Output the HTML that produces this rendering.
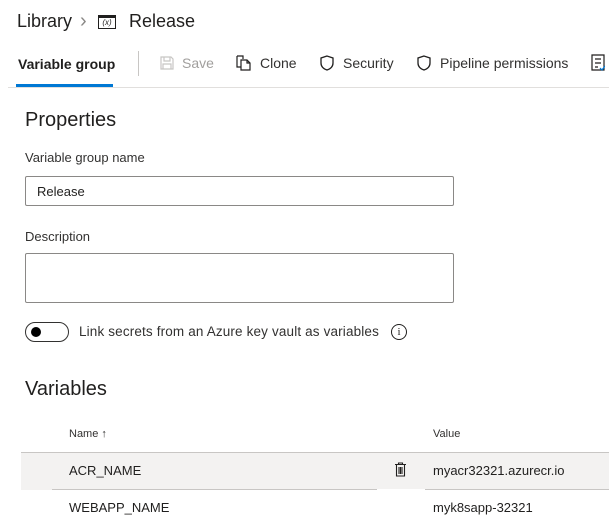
<!DOCTYPE html>
<html><head><meta charset="utf-8"><style>
*{margin:0;padding:0;box-sizing:border-box}
body{width:609px;height:532px;background:#fff;font-family:"Liberation Sans",sans-serif;color:#201f1e;position:relative;overflow:hidden}
.a{position:absolute;white-space:nowrap}
.tb{font-size:14px;color:#323130}
</style></head><body>
<div class="a" style="left:17px;top:11px;font-size:18px">Library</div>
<div class="a" style="left:80px;top:10px;font-size:20px;color:#8a8886">›</div>
<div class="a" style="left:98px;top:15px;width:18px;height:14px;border:1.5px solid #201f1e;border-top-width:3px;font-size:8px;font-style:italic;text-align:center;line-height:9px">(x)</div>
<div class="a" style="left:129px;top:11px;font-size:18px">Release</div>

<div class="a" style="left:18px;top:56px;font-size:14px;font-weight:600;color:#201f1e">Variable group</div>
<div class="a" style="left:16px;top:84px;width:97px;height:3px;background:#0078d4"></div>
<div class="a" style="left:8px;top:87px;width:601px;height:1px;background:#e1dfdd"></div>
<div class="a" style="left:138px;top:51px;width:1px;height:25px;background:#c8c6c4"></div>

<svg class="a" style="left:160px;top:56px" width="14" height="14" viewBox="0 0 14 14"><path d="M1 1h10l2 2v10H1z M4 1v4h6V1 M3 13V8h8v5" fill="none" stroke="#c8c6c4" stroke-width="1.2"/></svg>
<div class="a tb" style="left:182px;top:55px;color:#a19f9d">Save</div>
<svg class="a" style="left:236px;top:55px" width="16" height="16" viewBox="0 0 16 16"><path d="M1 1h6v3 M1 1v11h4 M5 5h6l3 3v7H5z M11 5v3h3" fill="none" stroke="#201f1e" stroke-width="1.2"/></svg>
<div class="a tb" style="left:260px;top:55px">Clone</div>
<svg class="a" style="left:320px;top:55px" width="14" height="16" viewBox="0 0 14 16"><path d="M7 1L1 3v5c0 4 3 6 6 7 3-1 6-3 6-7V3z" fill="none" stroke="#201f1e" stroke-width="1.3"/></svg>
<div class="a tb" style="left:343px;top:55px">Security</div>
<svg class="a" style="left:417px;top:55px" width="14" height="16" viewBox="0 0 14 16"><path d="M7 1L1 3v5c0 4 3 6 6 7 3-1 6-3 6-7V3z" fill="none" stroke="#201f1e" stroke-width="1.3"/></svg>
<div class="a tb" style="left:440px;top:55px">Pipeline permissions</div>
<svg class="a" style="left:591px;top:54px" width="14" height="18" viewBox="0 0 14 18"><path d="M1 1h12v15H1z M4 5h6 M4 9h6 M4 13h3" fill="none" stroke="#201f1e" stroke-width="1.2"/><path d="M9 14l2 2 3-4" fill="none" stroke="#0078d4" stroke-width="1.2"/></svg>

<div class="a" style="left:25px;top:109px;font-size:20px">Properties</div>
<div class="a" style="left:25px;top:150px;font-size:13px;color:#323130">Variable group name</div>
<div class="a" style="left:25px;top:176px;width:429px;height:30px;border:1px solid #8a8886;border-radius:2px;font-size:13px;padding:7px 11px">Release</div>
<div class="a" style="left:25px;top:229px;font-size:13px;color:#323130">Description</div>
<div class="a" style="left:25px;top:253px;width:429px;height:50px;border:1px solid #8a8886;border-radius:2px"></div>

<div class="a" style="left:25px;top:322px;width:44px;height:20px;border:1px solid #323130;border-radius:10px"></div>
<div class="a" style="left:31px;top:327px;width:10px;height:10px;border-radius:50%;background:#000"></div>
<div class="a" style="left:79px;top:324px;font-size:13.5px;letter-spacing:0.15px;color:#323130">Link secrets from an Azure key vault as variables</div>
<div class="a" style="left:391px;top:324px;width:16px;height:16px;border:1.3px solid #201f1e;border-radius:50%;font-size:11px;text-align:center;line-height:14px;font-family:'Liberation Serif',serif">i</div>

<div class="a" style="left:25px;top:378px;font-size:20px">Variables</div>
<div class="a" style="left:69px;top:428px;font-size:11px;color:#323130">Name ↑</div>
<div class="a" style="left:433px;top:428px;font-size:11px;color:#323130">Value</div>
<div class="a" style="left:21px;top:452px;width:588px;height:1px;background:#c8c6c4"></div>
<div class="a" style="left:21px;top:453px;width:588px;height:37px;background:#f3f2f1"></div>
<div class="a" style="left:52px;top:489px;width:325px;height:1px;background:#c8c6c4"></div>
<div class="a" style="left:377px;top:489px;width:48px;height:1px;background:#fff"></div>
<div class="a" style="left:425px;top:489px;width:184px;height:1px;background:#c8c6c4"></div>
<div class="a" style="left:69px;top:463px;font-size:13px">ACR_NAME</div>
<svg class="a" style="left:394px;top:462px" width="13" height="15" viewBox="0 0 13 15"><path d="M1 2.5h11 M4.5 2.5V1h4v1.5 M2.5 2.5v11.5h8V2.5 M5 5v7 M6.5 5v7 M8 5v7" fill="none" stroke="#201f1e" stroke-width="1.1"/></svg>
<div class="a" style="left:433px;top:463px;font-size:13px">myacr32321.azurecr.io</div>
<div class="a" style="left:69px;top:500px;font-size:13px">WEBAPP_NAME</div>
<div class="a" style="left:433px;top:500px;font-size:13px">myk8sapp-32321</div>
</body></html>
